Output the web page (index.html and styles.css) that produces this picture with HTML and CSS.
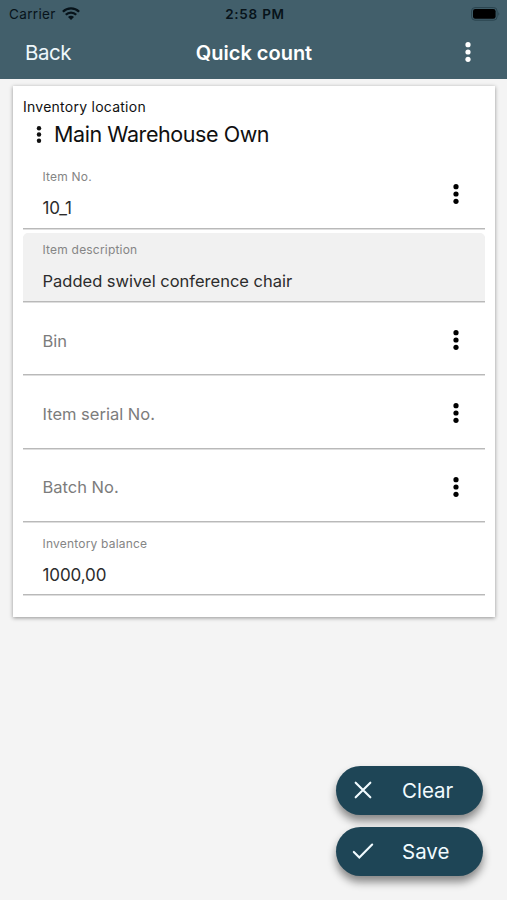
FILE: index.html
```html
<!DOCTYPE html>
<html lang="en">
<head>
<meta charset="utf-8">
<title>Quick count</title>
<link rel="stylesheet" href="styles.css">
</head>
<body>
<svg class="defs" width="0" height="0" aria-hidden="true">
  <symbol id="dots" viewBox="0 0 6 20"><circle cx="3" cy="2.7" r="2.6"/><circle cx="3" cy="10" r="2.6"/><circle cx="3" cy="17.3" r="2.6"/></symbol>
</svg>
<header class="header">
  <div class="status">
    <div class="carrier"><span class="carrier-name">Carrier</span>
      <svg class="wifi" viewBox="0 0 18 13"><g fill="none" stroke="#07131a" stroke-width="2.3"><path d="M.9 4.8a11.5 11.5 0 0 1 16.2 0"/><path d="M3.8 7.8a7.3 7.3 0 0 1 10.4 0"/></g><path fill="#07131a" d="M6 10a4.2 4.2 0 0 1 6 0l-3 3z"/></svg>
    </div>
    <span class="time">2:58 PM</span>
    <svg class="battery" viewBox="0 0 30 14"><rect x=".6" y=".6" width="25.5" height="12.6" rx="3.4" fill="none" stroke="#29434e" stroke-width="1"/><rect x="2" y="2" width="22.6" height="9.8" rx="2.2" fill="#000"/><path d="M27.4 4.8q1.8 2.1 0 4.2z" fill="#29434e"/></svg>
  </div>
  <nav class="nav">
    <span class="back">Back</span>
    <h1 class="title">Quick count</h1>
    <svg class="dots"><use href="#dots"/></svg>
  </nav>
</header>
<main class="card">
  <div class="location-label"><span>Inventory location</span></div>
  <div class="location"><svg class="dots small"><use href="#dots"/></svg><span>Main Warehouse Own</span></div>
  <section class="fields">
    <div class="field"><div class="text"><label>Item No.</label><span class="value code">10_1</span></div><svg class="dots"><use href="#dots"/></svg></div>
    <div class="field disabled"><div class="text"><label>Item description</label><span class="value">Padded swivel conference chair</span></div></div>
    <div class="field"><span class="placeholder">Bin</span><svg class="dots"><use href="#dots"/></svg></div>
    <div class="field"><span class="placeholder">Item serial No.</span><svg class="dots"><use href="#dots"/></svg></div>
    <div class="field"><span class="placeholder">Batch No.</span><svg class="dots"><use href="#dots"/></svg></div>
    <div class="field"><div class="text"><label>Inventory balance</label><span class="value number">1000,00</span></div></div>
  </section>
</main>
<div class="actions">
  <button class="action"><svg viewBox="0 0 24 24"><path d="M4 4l16 16M20 4L4 20"/></svg><span class="clear">Clear</span></button>
  <button class="action"><svg viewBox="0 0 24 24"><path d="M2 13l6 6L22 5"/></svg><span class="save">Save</span></button>
</div>
</body>
</html>
```
FILE: styles.css
```css
* { box-sizing: border-box; }
body {
  margin: 0;
  height: 900px;
  overflow: hidden;
  display: flex;
  flex-direction: column;
  background: #f4f4f4;
  color: #101010;
  font-family: Inter, "Liberation Sans", sans-serif;
  white-space: nowrap;
}
.defs { position: absolute; }
.header {
  flex: none;
  height: 79px;
  background: #425f6b;
}
.status {
  height: 27px;
  display: grid;
  grid-template-columns: 1fr auto 1fr;
  align-items: center;
  padding: 0 6px 0 9px;
  color: #07131a;
  font-size: 13px;
  line-height: 28px;
}
.carrier { display: flex; align-items: center; gap: 6px; }
.carrier-name { width: 47px; font-size: 13.5px; letter-spacing: .35px; }
.wifi { width: 18px; height: 13px; margin-top: -1px; }
.time { font-size: 13.5px; font-weight: 600; letter-spacing: .75px; }
.battery { width: 30px; height: 14px; justify-self: end; margin-top: -1px; }
.nav {
  height: 52px;
  display: grid;
  grid-template-columns: 1fr auto 1fr;
  align-items: center;
  padding: 0 36px 0 25px;
  color: #fff;
  line-height: 50px;
}
.back { font-size: 20.5px; color: #eef7fb; letter-spacing: -.5px; }
.title { margin: 0 0 0 12px; font-size: 20px; font-weight: 600; letter-spacing: 0; }
.dots { width: 6px; height: 20px; fill: currentColor; flex: none; }
.nav .dots { justify-self: end; margin-top: -2px; }
.card {
  flex: none;
  margin: 7px 12px 0 13px;
  height: 531px;
  padding: 11px 10px 0;
  background: #fff;
  box-shadow: 0 1px 4px rgba(0, 0, 0, .4);
}
.location-label { height: 20px; line-height: 20px; font-size: 14px; letter-spacing: .25px; }
.location {
  display: flex;
  align-items: center;
  height: 34px;
  padding: 0 0 0 13px;
  gap: 12px;
  font-size: 21.5px;
  line-height: 28px;
  letter-spacing: -.43px;
}
.small { height: 17px; }
.fields { padding-top: 8.4px; }
.field {
  display: flex;
  align-items: center;
  justify-content: space-between;
  height: 69.3px;
  margin-bottom: 4px;
  padding: 0 26px 0 19.5px;
  border-bottom: 1px solid #b9b9b9;
  box-shadow: 0 1px #dedede;
  color: #000;
}
.disabled { background: #f1f1f1; border-radius: 5px 5px 0 0; }
.text { display: flex; flex-direction: column; gap: 11px; padding-top: 2px; }
.text label { font-size: 12px; line-height: 16px; color: #858585; letter-spacing: .2px; }
.value { font-size: 16.5px; line-height: 24px; color: #2c2c2c; letter-spacing: 0; }
.code, .number { font-size: 17px; letter-spacing: -.1px; }
.placeholder { font-size: 16.5px; line-height: 20px; padding-top: 1px; color: #7c7c7c; letter-spacing: 0; }
.actions {
  display: flex;
  flex-direction: column;
  gap: 12px;
  margin: auto 24px 24px auto;
}
.action {
  display: flex;
  align-items: center;
  width: 147px;
  height: 49px;
  padding: 0 0 1px 16px;
  gap: 28px;
  border: 0;
  border-radius: 25px;
  background: #1e4556;
  box-shadow: 0 6px 8px rgba(0, 0, 0, .45);
  color: #f1fbff;
  font: 20.5px Inter, "Liberation Sans", sans-serif;
}
.action svg { width: 22px; height: 22px; fill: none; stroke: currentColor; stroke-width: 2.3; stroke-linecap: round; }
```
